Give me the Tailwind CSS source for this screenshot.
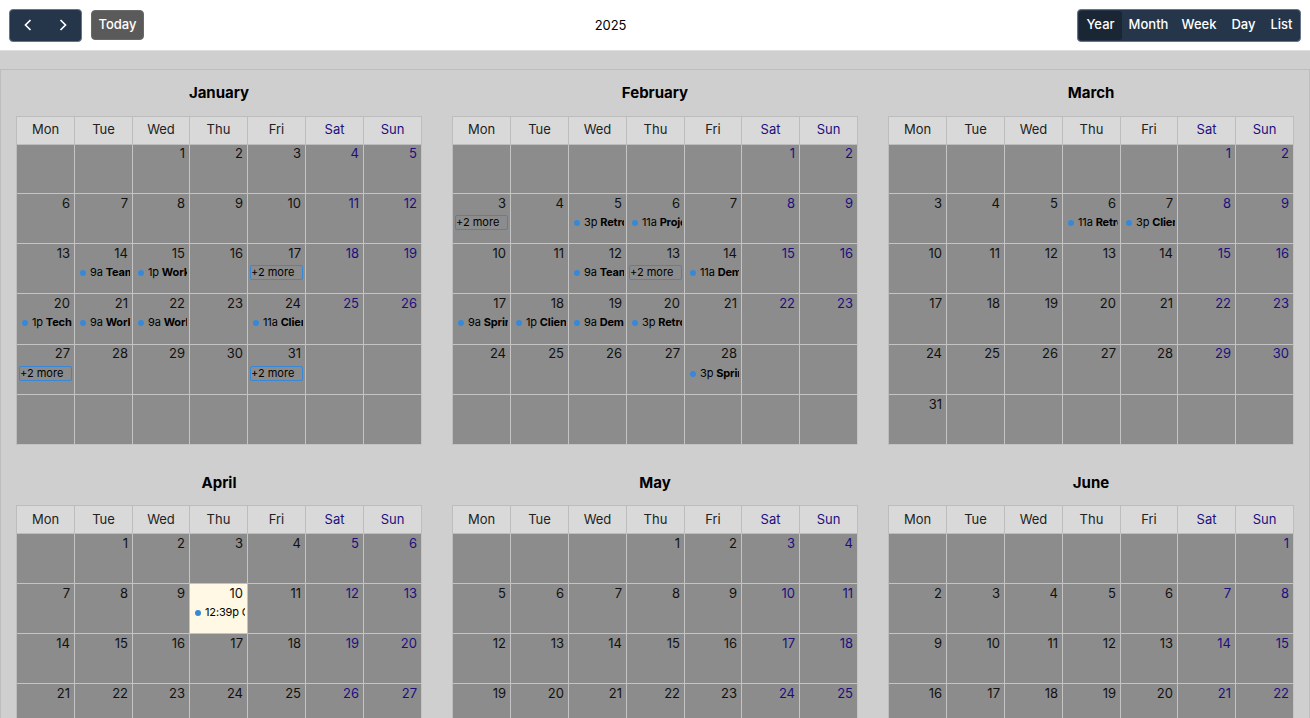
<!DOCTYPE html>
<html lang="en">

<head>
    <meta charset="UTF-8">
    <title>Calendar</title>
    <script src="https://cdn.jsdelivr.net/npm/@tailwindcss/browser@4"></script>
</head>

<body class="h-screen overflow-hidden bg-[#cfcfcf] font-['Inter',sans-serif] text-[13px] text-black antialiased">

    <header class="h-[51px] bg-white border-b border-[#e0e0e0] flex items-center justify-between px-[9px]">
        <div class="flex items-center gap-[9px]">
            <div class="flex h-[33px] w-[73px] items-center rounded-[4px] border border-[#66758a] bg-[#25364a] text-white">
                <button class="flex-1 flex justify-center">
                    <svg class="w-[16px] h-[16px]" viewBox="0 0 16 16" fill="none" stroke="currentColor" stroke-width="1.7"><path d="M10.5 3 5.5 8l5 5" /></svg>
                </button>
                <button class="flex-1 flex justify-center">
                    <svg class="w-[16px] h-[16px]" viewBox="0 0 16 16" fill="none" stroke="currentColor" stroke-width="1.7"><path d="M5.5 3 10.5 8l-5 5" /></svg>
                </button>
            </div>
            <button class="h-[30px] w-[53px] rounded-[4px] border border-[#6a6a6a] bg-[#5a5a5a] text-white font-medium">Today</button>
        </div>
        <div class="pt-[2px] tracking-[-0.1px]">2025</div>
        <div class="flex h-[33px] w-[224px] items-center rounded-[4px] border border-[#66758a] bg-[#25364a] text-white font-medium pl-[1px]">
            <button class="h-[29px] w-[43px] rounded-[3px] bg-[#1a2633]">Year</button>
            <button class="h-[29px] w-[53px]">Month</button>
            <button class="h-[29px] w-[49px] pr-[1px]">Week</button>
            <button class="h-[29px] w-[39px]">Day</button>
            <button class="h-[29px] w-[37px]">List</button>
        </div>
    </header>

    <main class="mt-[18px] h-[700px] border border-[#bdbdbd] px-[15px] pt-[11px]">
        <div id="months" class="grid grid-cols-[406px_406px_406px] gap-x-[30px] gap-y-[25px]"></div>
    </main>

    <script>
        const colsA = "grid-cols-[58px_58px_57px_58px_58px_58px_58px]";
        const colsB = "grid-cols-[58px_58px_58px_58px_57px_58px_58px]";
        const rowsTop = "grid-rows-[28px_49px_50px_50px_51px_50px_50px]";
        const rowsBottom = "grid-rows-[28px_50px_50px_50px_50px_50px_50px]";

        const months = [
            { name: "January", offset: 2, days: 31, cols: colsA, rows: rowsTop, top: true },
            { name: "February", offset: 5, days: 28, cols: colsB, rows: rowsTop, top: true },
            { name: "March", offset: 5, days: 31, cols: colsB, rows: rowsTop, top: true },
            { name: "April", offset: 1, days: 30, cols: colsA, rows: rowsBottom },
            { name: "May", offset: 3, days: 31, cols: colsB, rows: rowsBottom },
            { name: "June", offset: 6, days: 30, cols: colsB, rows: rowsBottom },
        ];

        const events = {
            January: {
                14: ["9a", "Team Sync"], 15: ["1p", "Workshop"], 17: "more", 20: ["1p", "Tech Talk"],
                21: ["9a", "Workshop"], 22: ["9a", "Workshop"], 24: ["11a", "Client Call"], 27: "more", 31: "more",
            },
            February: {
                3: "more", 5: ["3p", "Retro"], 6: ["11a", "Project"], 12: ["9a", "Team Sync"], 13: "more",
                14: ["11a", "Demo"], 17: ["9a", "Sprint"], 18: ["1p", "Client Call"], 19: ["9a", "Demo"],
                20: ["3p", "Retro"], 28: ["3p", "Sprint"],
            },
            March: { 6: ["11a", "Retro"], 7: ["3p", "Client Call"] },
            April: { 10: ["12:39p", "", "Current"] },
        };

        function eventHtml(ev) {
            if (!ev) return "";
            if (ev === "more") {
                return `<div class="mt-[3px] ml-[2px] w-[53px] h-[15px] rounded-[2px] border border-[#3788d8] text-[11px] leading-[12px] whitespace-nowrap">+2 more</div>`;
            }
            const title = ev[2] ? `<span>${ev[2]}</span>` : `<b class="font-bold">${ev[1]}</b>`;
            return `<div class="mt-[3px] mx-[2px] h-[15px] flex items-center overflow-hidden text-[11px] tracking-[-0.15px] whitespace-nowrap">
                <span class="ml-[3px] mr-[4px] w-[6px] h-[6px] shrink-0 rounded-full bg-[#3788d8]"></span>
                <span class="-translate-y-[0.5px]">${ev[0]} ${title}</span>
            </div>`;
        }

        function monthHtml(m) {
            const headPad = m.top ? "pb-[1px]" : "";
            const head = ["Mon", "Tue", "Wed", "Thu", "Fri", "Sat", "Sun"].map((d, i) => {
                const color = i > 4 ? "text-[#1c0f80]" : "text-[#222222]";
                return `<div class="flex items-center justify-center ${headPad} bg-[#d9d9d9] border-r border-b border-[#bdbdbd] ${color}">${d}</div>`;
            }).join("");

            let cells = "";
            for (let i = 0; i < 42; i++) {
                const day = i - m.offset + 1;
                const inMonth = day >= 1 && day <= m.days;
                const isToday = m.name === "April" && day === 10;
                const bg = isToday ? "bg-[#fff8e4]" : "bg-[#8c8c8c]";
                const color = i % 7 > 4 ? "text-[#1c0f80]" : "text-[#111111]";
                const row = Math.floor(i / 7);
                const leading = m.top && (row === 0 || row === 4) ? "leading-[16px]" : "leading-[18px]";
                const number = inMonth ? `<div class="h-[18px] pr-[4px] text-right ${leading} ${color}">${day}</div>` : "";
                const ev = inMonth && events[m.name] ? eventHtml(events[m.name][day]) : "";
                cells += `<div class="min-w-0 overflow-hidden border-r border-b border-[#c4c4c4] ${bg}">${number}${ev}</div>`;
            }

            const titlePad = m.top ? "pt-[1px]" : "pt-[2px]";
            return `<section>
                <h2 class="h-[35px] ${titlePad} text-center text-[15px] leading-[22px] font-bold">${m.name}</h2>
                <div class="grid ${m.cols} ${m.rows} border-l border-t border-[#bdbdbd]">${head}${cells}</div>
            </section>`;
        }

        document.getElementById("months").innerHTML = months.map(monthHtml).join("");
    </script>
</body>

</html>
